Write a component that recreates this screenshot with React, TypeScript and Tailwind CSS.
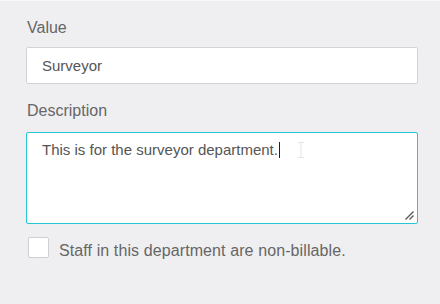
import React from "react";

export default function App() {
  return (
    <div
      className="w-[440px] h-[304px] bg-[#efeff1] border-t border-[#f7f7f8] overflow-hidden"
      style={{ fontFamily: '"Liberation Sans", Arial, sans-serif' }}
    >
      <div className="pl-[26px] pr-[22px] pt-[17px] flex flex-col">
        <div className="text-[16px] leading-[20px] text-[#666] pl-[1px]">Value</div>
        <div className="mt-[9px] h-[37px] bg-white border border-[#d3d3d5] rounded-[2px] flex items-center pl-[15px] text-[15px] leading-[20px] text-[#555]">
          Surveyor
        </div>
        <div className="mt-[17px] text-[16px] leading-[20px] text-[#666] pl-[1px]">Description</div>
        <div className="relative mt-[11px] h-[92px] bg-white border border-[#22c7cf] rounded-[2px] pl-[15px] pt-[7px]">
          <div className="text-[15px] leading-[20px] text-[#555] flex items-center">
            <span>This is for the surveyor department.</span>
            <span className="inline-block w-[1px] h-[16px] bg-[#222] ml-[1px]"></span>
          </div>
          <svg
            className="absolute left-[270px] top-[9px]"
            width="8"
            height="16"
            viewBox="0 0 8 16"
          >
            <path d="M1 0.5h6M1 15.5h6M4 0.5v15" stroke="#e4e4e4" strokeWidth="1" fill="none" />
          </svg>
          <svg
            className="absolute right-[2px] bottom-[2px]"
            width="11"
            height="11"
            viewBox="0 0 11 11"
          >
            <path d="M1.5 9.5L9.5 1.5M5.5 9.5L9.5 5.5" stroke="#555" strokeWidth="1.3" fill="none" />
          </svg>
        </div>
        <div className="mt-[13px] flex items-start pl-[2px]">
          <div className="w-[21px] h-[21px] bg-white border border-[#cfcfd1] rounded-[2px] shrink-0"></div>
          <div className="ml-[10px] pt-[4px] text-[16px] leading-[20px] tracking-[0.1px] text-[#666]">
            Staff in this department are non-billable.
          </div>
        </div>
      </div>
    </div>
  );
}
